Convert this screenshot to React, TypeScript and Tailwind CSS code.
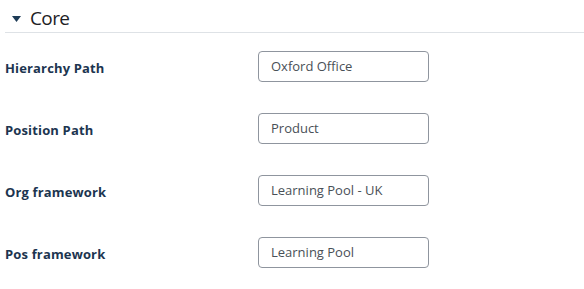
import React from "react";

const fields = [
  { label: "Hierarchy Path", value: "Oxford Office" },
  { label: "Position Path", value: "Product" },
  { label: "Org framework", value: "Learning Pool - UK" },
  { label: "Pos framework", value: "Learning Pool" },
];

export default function App() {
  return (
    <div className="w-[584px] h-[289px] bg-white pl-[5px] font-['Open_Sans',sans-serif] overflow-hidden">
      {/* Section header */}
      <div className="flex items-center h-[33px] border-b border-[#dee2e6] pt-[4px]">
        <svg width="9" height="6" viewBox="0 0 9 6" className="ml-[7px] mr-[9px] mt-[1px]">
          <path d="M0 0 L9 0 L4.5 6 Z" fill="#1d3b56" />
        </svg>
        <span className="text-[19px] leading-none tracking-[-0.6px] text-[#1d2125]">Core</span>
      </div>

      <div className="pt-[18px]">
        {fields.map((f) => (
          <div key={f.label} className="flex items-center h-[31px] mb-[31px]">
            <label className="w-[253px] pt-[4px] text-[13px] font-bold tracking-[0.15px] text-[#1c3550]">
              {f.label}
            </label>
            <div className="w-[171px] h-[31px] border border-[#8f959e] rounded-[4px] flex items-center pl-[12px] text-[13px] text-[#495057]">
              {f.value}
            </div>
          </div>
        ))}
      </div>
    </div>
  );
}
